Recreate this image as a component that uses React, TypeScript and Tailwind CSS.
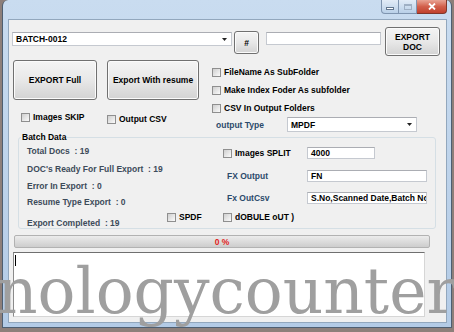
import React from "react";

function Check({ label, className = "" }: { label: string; className?: string }) {
  return (
    <div className={`flex items-center gap-[3px] h-[10px] ${className}`}>
      <span className="w-[9px] h-[9px] shrink-0 border border-[#8f8f8f] bg-linear-to-br from-[#cfcfcf] to-[#fbfbfb]" />
      <span className="whitespace-nowrap text-black">{label}</span>
    </div>
  );
}

function Btn({ children, className = "" }: { children: React.ReactNode; className?: string }) {
  return (
    <div
      className={`flex items-center justify-center text-center text-black border border-[#707070] rounded-[3px] bg-linear-to-b from-[#f4f4f4] via-[#e8e8e8] to-[#d3d3d3] shadow-[inset_0_0_0_1px_#fbfbfb] ${className}`}
    >
      {children}
    </div>
  );
}

function TextBox({ value = "", className = "" }: { value?: string; className?: string }) {
  return (
    <div
      className={`flex items-center bg-white border border-[#c5c9d0] border-t-[#abadb3] pl-[3px] overflow-hidden whitespace-nowrap text-black ${className}`}
    >
      {value}
    </div>
  );
}

function Combo({ value, className = "" }: { value: string; className?: string }) {
  return (
    <div
      className={`flex items-center justify-between bg-white border border-[#c5c9d0] border-t-[#abadb3] pl-[3px] pr-[4px] text-black ${className}`}
    >
      <span>{value}</span>
      <svg width="5" height="3" viewBox="0 0 5 3">
        <path d="M0 0 H5 L2.5 3 Z" fill="#222" />
      </svg>
    </div>
  );
}

export default function App() {
  return (
    <div className="relative w-[454px] h-[332px] overflow-hidden bg-[#8d7f7a] font-['Liberation_Sans',Arial,sans-serif] text-[8.5px] font-bold leading-[10px]">
      {/* window frame */}
      <div className="ml-[2px] w-[450px] h-[328px] flex flex-col pl-[6px] pr-[5px] pb-[5px] border-x border-b border-[#4e5f72] rounded-t-[6px] bg-linear-to-b from-[#c9dcf0] to-[#b3cbe6]">
        {/* title bar */}
        <div className="h-[20px] flex justify-end items-start -mr-[1px]">
          <div className="flex h-[14px]">
            <div className="w-[18px] flex items-center justify-center rounded-bl-[4px] border border-t-0 border-[#7f95b0] bg-linear-to-b from-[#e2ecf7] to-[#b9d0e8]">
              <span className="mt-[4px] w-[8px] h-[3px] bg-white border border-[#62778f]" />
            </div>
            <div className="w-[18px] flex items-center justify-center border-b border-r border-[#7f95b0] bg-linear-to-b from-[#e2ecf7] to-[#b9d0e8]">
              <span className="w-[8px] h-[6px] border border-[#9fb0c4] border-t-2" />
            </div>
            <div className="w-[30px] flex items-center justify-center rounded-br-[4px] border border-t-0 border-l-0 border-[#80372b] bg-linear-to-b from-[#e8a394] via-[#d2604c] to-[#c0402c]">
              <svg width="8" height="7" viewBox="0 0 8 7">
                <path d="M1 0.5 L7 6.5 M7 0.5 L1 6.5" stroke="#fff" strokeWidth="1.8" />
              </svg>
            </div>
          </div>
        </div>

        {/* client area */}
        <div className="w-[437px] h-[302px] bg-[#f0f0f0] overflow-hidden flex flex-col shadow-[0_0_0_1px_#92a7bd]">
          <div className="flex items-start pt-[7px] pl-[3px]">
            <Combo value="BATCH-0012" className="mt-[5px] w-[220px] h-[14px]" />
            <Btn className="ml-[2px] mt-[4px] w-[25px] h-[23px]">#</Btn>
            <TextBox className="ml-[7px] mt-[5px] w-[115px] h-[13px]" />
            <Btn className="ml-[4px] w-[55px] h-[29px]">
              EXPORT
              <br />
              DOC
            </Btn>
          </div>

          <div className="flex mt-[4px] pl-[4px]">
            <div className="w-[199px] flex flex-col">
              <div className="flex gap-[10px]">
                <Btn className="w-[84px] h-[40px]">EXPORT Full</Btn>
                <Btn className="w-[92px] h-[40px]">Export With resume</Btn>
              </div>
              <div className="flex items-start mt-[12px]">
                <Check label="Images SKIP" className="ml-[8px] w-[86px]" />
                <Check label="Output CSV" className="mt-[2px]" />
              </div>
            </div>
            <div className="flex flex-col">
              <Check label="FileName As SubFolder" className="mt-[7px]" />
              <Check label="Make Index Foder As subfolder" className="mt-[8px]" />
              <Check label="CSV In Output Folders" className="mt-[8px]" />
              <div className="flex items-center mt-[4px]">
                <span className="ml-[4px] w-[71px] text-[#2b4a6b]">output Type</span>
                <Combo value="MPDF" className="w-[130px] h-[15px]" />
              </div>
            </div>
          </div>

          <fieldset className="ml-[9px] w-[418px] m-0 p-0 min-w-0 border border-[#d5dfe5] rounded-[3px]">
            <legend className="ml-[2px] px-[1px] text-black">Batch Data</legend>
            <div className="flex">
              <div className="w-[204px] flex flex-col pl-[8px] text-[#3d4b5a] whitespace-pre">
                <span className="mt-[4px]">Total Docs  : 19</span>
                <span className="mt-[8px]">DOC's Ready For Full Export  : 19</span>
                <span className="mt-[7px]">Error In Export  : 0</span>
                <span className="mt-[6px]">Resume Type Export  : 0</span>
              </div>
              <div className="flex flex-col">
                <div className="flex items-center mt-[5px] h-[12px]">
                  <Check label="Images SPLIT" className="w-[84px]" />
                  <TextBox value="4000" className="w-[68px] h-[12px]" />
                </div>
                <div className="flex items-center mt-[11px]">
                  <span className="ml-[4px] w-[80px] text-[#2b4a6b]">FX Output</span>
                  <TextBox value="FN" className="w-[120px] h-[12px]" />
                </div>
                <div className="flex items-center mt-[10px]">
                  <span className="ml-[4px] w-[80px] text-[#2b4a6b]">Fx OutCsv</span>
                  <TextBox value="S.No,Scanned Date,Batch No" className="w-[120px] h-[12px]" />
                </div>
              </div>
            </div>
            <div className="flex items-start mt-[5px]">
              <span className="ml-[8px] w-[140px] mt-[6px] text-[#3d4b5a] whitespace-pre">Export Completed  : 19</span>
              <Check label="SPDF" className="w-[56px]" />
              <Check label="dOBULE oUT )" />
            </div>
          </fieldset>

          <div className="mt-[6px] ml-[5px] w-[416px] h-[13px] flex items-center justify-center rounded-[2px] border border-[#b2b2b2] bg-linear-to-b from-[#ececec] via-[#dcdcdc] to-[#cdcdcd]">
            <span className="text-[#e3211b]">0 %</span>
          </div>

          <div className="mt-[4px] ml-[4px] w-[412px] h-[65px] bg-white border border-[#d6d6d6] border-t-[#6f6f6f] border-l-[#8a8a8a] pl-[1px] pt-[2px]">
            <span className="block w-px h-[11px] bg-black" />
          </div>
        </div>
      </div>

      {/* watermark */}
      <div className="absolute left-[-3px] top-[260px] font-['DejaVu_Serif',serif] text-[63px] leading-[63px] font-normal text-[#9f9f9f] whitespace-nowrap pointer-events-none">
        nologycounter
      </div>
    </div>
  );
}
